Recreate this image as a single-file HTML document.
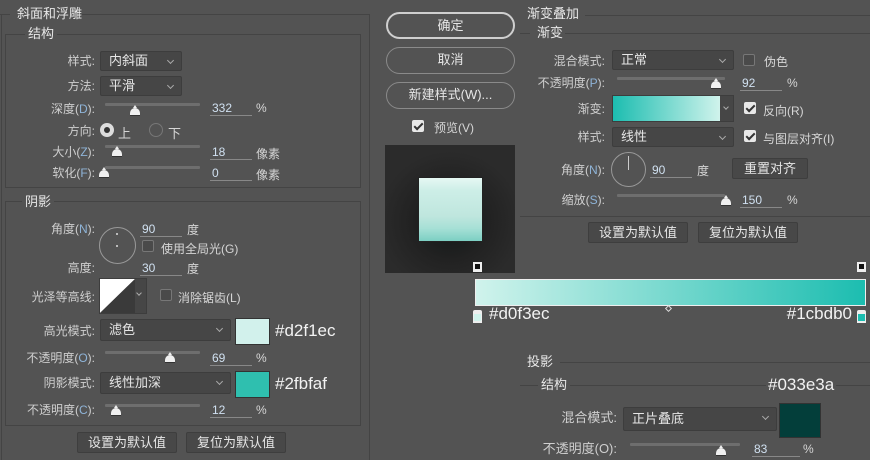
<!DOCTYPE html>
<html><head><meta charset="utf-8"><style>
*{margin:0;padding:0;box-sizing:border-box}
html,body{width:870px;height:460px;overflow:hidden}
body{background:#535353;position:relative;font-family:"Liberation Sans","Noto Sans CJK SC",sans-serif;font-size:12px;color:#d6d6d6}
.a{position:absolute;white-space:nowrap}
.l{position:absolute;white-space:nowrap;text-align:right;color:#cfcfcf;line-height:14px}
.l b{font-weight:normal;color:#8fb4d8}
.t{color:#e8e8e8;font-size:13px;line-height:14px}
.hl{position:absolute;height:1px;background:#444}
.box{position:absolute;border:1px solid #444}
.dd{position:absolute;background:#464646;border:1px solid #3d3d3d;border-radius:2px;color:#e6e6e6;padding-left:8px;line-height:18px;font-size:13px}
.dd:after{content:"";position:absolute;right:8px;top:6px;width:4px;height:4px;border-right:1px solid #aaa;border-bottom:1px solid #aaa;transform:rotate(45deg)}
.tr{position:absolute;height:3px;background:#6e6e6e;border-radius:1px}
.th{position:absolute;width:10px;height:8px;background:#f0f0f0;border-radius:5px 5px 0 0;border-bottom:1px solid #333}
.th:before{content:"";position:absolute;left:3px;top:-3px;border-left:2px solid transparent;border-right:2px solid transparent;border-bottom:3px solid #f0f0f0}
.v{position:absolute;border-bottom:1px solid #888;color:#d0e0f0;line-height:14px;padding-left:2px}
.cb{position:absolute;width:12px;height:12px;border:1px solid #777;border-radius:2px;background:#4a4a4a}
.cb.k{background:#e8e8e8;border-color:#e8e8e8}
.cb.k:after{content:"";position:absolute;left:3px;top:0px;width:3px;height:7px;border-right:2px solid #333;border-bottom:2px solid #333;transform:rotate(45deg)}
.btn{position:absolute;background:#484848;border:1px solid #3e3e3e;border-radius:2px;text-align:center;color:#e6e6e6;font-size:13px}
.pill{position:absolute;border:1px solid #8a8a8a;border-radius:14px;text-align:center;color:#e6e6e6;font-size:13px;line-height:24px}
.hex{position:absolute;color:#f2f2f2;font-size:17px;line-height:18px}
</style></head><body>

<div class="box" style="left:1px;top:14px;width:369px;height:446px;border-top:none;border-bottom:none"></div>
<div class="hl" style="left:0;top:14px;width:10px"></div>
<div class="hl" style="left:82px;top:14px;width:288px"></div>
<div class="a t" style="left:17px;top:7px;background:#535353">斜面和浮雕</div>

<div class="box" style="left:5px;top:34px;width:356px;height:154px"></div>
<div class="a t" style="left:25px;top:27px;background:#535353;padding:0 3px">结构</div>

<div class="l" style="right:775px;top:54px">样式:</div>
<div class="dd" style="left:100px;top:51px;width:82px;height:20px">内斜面</div>
<div class="l" style="right:775px;top:79px">方法:</div>
<div class="dd" style="left:100px;top:76px;width:82px;height:20px">平滑</div>
<div class="l" style="right:775px;top:102px">深度(<b>D</b>):</div>
<div class="tr" style="left:105px;top:103px;width:95px"></div>
<div class="th" style="left:130px;top:108px"></div>
<div class="v" style="left:210px;top:101px;width:42px">332</div>
<div class="a" style="left:256px;top:101px">%</div>
<div class="l" style="right:775px;top:124px">方向:</div>
<div class="a" style="left:100px;top:123px;width:14px;height:14px;border-radius:50%;background:#ddd;border:3px solid #ddd"><div style="width:6px;height:6px;margin:1px;border-radius:50%;background:#333"></div></div>
<div class="a" style="left:118px;top:123px;font-size:13px">上</div>
<div class="a" style="left:149px;top:123px;width:14px;height:14px;border-radius:50%;border:1px solid #777"></div>
<div class="a" style="left:168px;top:123px;font-size:13px">下</div>
<div class="l" style="right:775px;top:145px">大小(<b>Z</b>):</div>
<div class="tr" style="left:105px;top:145px;width:95px"></div>
<div class="th" style="left:112px;top:149px"></div>
<div class="v" style="left:210px;top:145px;width:42px">18</div>
<div class="a" style="left:256px;top:145px">像素</div>
<div class="l" style="right:775px;top:166px">软化(<b>F</b>):</div>
<div class="tr" style="left:105px;top:166px;width:95px"></div>
<div class="th" style="left:99px;top:170px"></div>
<div class="v" style="left:210px;top:166px;width:42px">0</div>
<div class="a" style="left:256px;top:166px">像素</div>

<div class="box" style="left:5px;top:201px;width:356px;height:225px"></div>
<div class="a t" style="left:22px;top:195px;background:#535353;padding:0 3px">阴影</div>
<div class="l" style="right:775px;top:222px">角度(<b>N</b>):</div>
<div class="a" style="left:99px;top:227px;width:37px;height:37px;border-radius:50%;border:1px solid #999"></div>
<div class="a" style="left:116px;top:233px;width:2px;height:2px;background:#bbb"></div>
<div class="a" style="left:116px;top:245px;width:2px;height:2px;background:#bbb"></div>
<div class="v" style="left:140px;top:222px;width:42px">90</div>
<div class="a" style="left:187px;top:221px">度</div>
<div class="cb" style="left:142px;top:240px"></div>
<div class="a" style="left:161px;top:240px">使用全局光(G)</div>
<div class="l" style="right:775px;top:261px">高度:</div>
<div class="v" style="left:140px;top:261px;width:42px">30</div>
<div class="a" style="left:187px;top:260px">度</div>
<div class="l" style="right:775px;top:290px">光泽等高线:</div>
<div class="a" style="left:99px;top:278px;width:48px;height:36px;border:1px solid #3d3d3d;background:#464646"></div>
<svg class="a" style="left:100px;top:279px" width="35" height="34"><polygon points="0,0 35,0 0,34" fill="#fff"/><polygon points="35,0 35,34 0,34" fill="#3a3a3a"/></svg>
<div class="a" style="left:137px;top:291px;width:4px;height:4px;border-right:1px solid #aaa;border-bottom:1px solid #aaa;transform:rotate(45deg)"></div>
<div class="cb" style="left:160px;top:289px"></div>
<div class="a" style="left:178px;top:289px">消除锯齿(L)</div>
<div class="l" style="right:775px;top:324px">高光模式:</div>
<div class="dd" style="left:100px;top:319px;width:131px;height:22px;line-height:20px">滤色</div>
<div class="a" style="left:235px;top:318px;width:35px;height:27px;background:#d2f1ec;border:1px solid #333"></div>
<div class="hex" style="left:275px;top:322px">#d2f1ec</div>
<div class="l" style="right:775px;top:351px">不透明度(<b>O</b>):</div>
<div class="tr" style="left:105px;top:351px;width:95px"></div>
<div class="th" style="left:165px;top:355px"></div>
<div class="v" style="left:210px;top:351px;width:42px">69</div>
<div class="a" style="left:256px;top:351px">%</div>
<div class="l" style="right:775px;top:376px">阴影模式:</div>
<div class="dd" style="left:100px;top:372px;width:131px;height:22px;line-height:20px">线性加深</div>
<div class="a" style="left:235px;top:371px;width:35px;height:27px;background:#2fbfaf;border:1px solid #333"></div>
<div class="hex" style="left:275px;top:375px">#2fbfaf</div>
<div class="l" style="right:775px;top:403px">不透明度(<b>C</b>):</div>
<div class="tr" style="left:105px;top:404px;width:95px"></div>
<div class="th" style="left:111px;top:408px"></div>
<div class="v" style="left:210px;top:403px;width:42px">12</div>
<div class="a" style="left:256px;top:403px">%</div>
<div class="btn" style="left:77px;top:432px;width:100px;height:21px;line-height:19px">设置为默认值</div>
<div class="btn" style="left:186px;top:432px;width:100px;height:21px;line-height:19px">复位为默认值</div>

<div class="pill" style="left:386px;top:12px;width:129px;height:27px;border:2px solid #cfcfcf">确定</div>
<div class="pill" style="left:386px;top:47px;width:129px;height:27px">取消</div>
<div class="pill" style="left:386px;top:82px;width:129px;height:27px">新建样式(W)...</div>
<div class="cb k" style="left:412px;top:120px"></div>
<div class="a" style="left:434px;top:119px">预览(V)</div>
<div class="a" style="left:385px;top:145px;width:130px;height:128px;background:radial-gradient(ellipse 55% 55% at 50% 60%,#101616 0%,#222 55%,#2b2b2b 100%)"></div>
<div class="a" style="left:418px;top:177px;width:65px;height:65px;border:1px solid #222;background:linear-gradient(#e6f8f4 0%,#cdeee7 20%,#bfe6de 60%,#a6e0d6 80%,#7ccfc3 100%)"></div>

<div class="hl" style="left:585px;top:15px;width:285px"></div>
<div class="a t" style="left:527px;top:7px">渐变叠加</div>
<div class="hl" style="left:520px;top:33px;width:10px"></div>
<div class="hl" style="left:565px;top:33px;width:305px"></div>
<div class="a t" style="left:537px;top:26px">渐变</div>
<div class="l" style="right:265px;top:54px">混合模式:</div>
<div class="dd" style="left:612px;top:50px;width:122px;height:20px">正常</div>
<div class="cb" style="left:743px;top:54px"></div>
<div class="a" style="left:764px;top:53px">伪色</div>
<div class="l" style="right:265px;top:76px">不透明度(<b>P</b>):</div>
<div class="tr" style="left:617px;top:77px;width:108px"></div>
<div class="th" style="left:711px;top:81px"></div>
<div class="v" style="left:740px;top:76px;width:42px">92</div>
<div class="a" style="left:787px;top:76px">%</div>
<div class="l" style="right:265px;top:102px">渐变:</div>
<div class="a" style="left:612px;top:95px;width:122px;height:27px;background:#464646;border:1px solid #3d3d3d"></div>
<div class="a" style="left:613px;top:96px;width:107px;height:25px;background:linear-gradient(90deg,#1cbdb0,#d0f3ec)"></div>
<div class="a" style="left:724px;top:105px;width:4px;height:4px;border-right:1px solid #aaa;border-bottom:1px solid #aaa;transform:rotate(45deg)"></div>
<div class="cb k" style="left:744px;top:102px"></div>
<div class="a" style="left:763px;top:102px">反向(R)</div>
<div class="l" style="right:265px;top:130px">样式:</div>
<div class="dd" style="left:612px;top:127px;width:122px;height:20px">线性</div>
<div class="cb k" style="left:744px;top:130px"></div>
<div class="a" style="left:763px;top:130px">与图层对齐(I)</div>
<div class="l" style="right:265px;top:163px">角度(<b>N</b>):</div>
<div class="a" style="left:611px;top:152px;width:35px;height:35px;border-radius:50%;border:1px solid #999"></div>
<div class="a" style="left:628px;top:156px;width:1px;height:14px;background:#ccc"></div>
<div class="v" style="left:650px;top:163px;width:42px">90</div>
<div class="a" style="left:697px;top:162px">度</div>
<div class="btn" style="left:732px;top:158px;width:76px;height:21px;line-height:19px">重置对齐</div>
<div class="l" style="right:265px;top:193px">缩放(<b>S</b>):</div>
<div class="tr" style="left:617px;top:194px;width:108px"></div>
<div class="th" style="left:721px;top:198px"></div>
<div class="v" style="left:740px;top:193px;width:42px">150</div>
<div class="a" style="left:787px;top:193px">%</div>
<div class="hl" style="left:520px;top:216px;width:350px"></div>
<div class="btn" style="left:588px;top:222px;width:100px;height:21px;line-height:19px">设置为默认值</div>
<div class="btn" style="left:698px;top:222px;width:100px;height:21px;line-height:19px">复位为默认值</div>

<div class="a" style="left:473px;top:262px;width:9px;height:10px;background:#eee;border:2px solid #eee"><div style="width:5px;height:5px;background:#111"></div></div>
<div class="a" style="left:857px;top:262px;width:9px;height:10px;background:#eee;border:2px solid #eee"><div style="width:5px;height:5px;background:#111"></div></div>
<div class="a" style="left:475px;top:279px;width:391px;height:27px;border:1px solid #eee;background:linear-gradient(90deg,#d0f3ec,#1cbdb0)"></div>
<div class="a" style="left:473px;top:310px;width:9px;height:13px;background:#eee;border-radius:2px 2px 0 0"><div style="margin:4px 1px 0;width:7px;height:7px;background:#d0f3ec"></div></div>
<div class="a" style="left:857px;top:310px;width:9px;height:13px;background:#eee;border-radius:2px 2px 0 0"><div style="margin:4px 1px 0;width:7px;height:7px;background:#1cbdb0"></div></div>
<div class="hex" style="left:489px;top:305px">#d0f3ec</div>
<div class="hex" style="right:18px;top:305px">#1cbdb0</div>
<div class="a" style="left:666px;top:306px;width:5px;height:5px;border:1px solid #ddd;transform:rotate(45deg)"></div>

<div class="hl" style="left:560px;top:362px;width:310px"></div>
<div class="a t" style="left:527px;top:355px">投影</div>
<div class="hl" style="left:520px;top:385px;width:350px"></div>
<div class="a t" style="left:538px;top:378px;background:#535353;padding:0 3px">结构</div>
<div class="hex" style="left:766px;top:376px;background:#535353;padding:0 2px">#033e3a</div>
<div class="l" style="right:253px;top:411px;font-size:13px">混合模式:</div>
<div class="dd" style="left:623px;top:407px;width:154px;height:24px;line-height:22px">正片叠底</div>
<div class="a" style="left:779px;top:403px;width:42px;height:35px;background:#033e3a;border:1px solid #333"></div>
<div class="l" style="right:253px;top:442px;font-size:13px">不透明度(O):</div>
<div class="tr" style="left:630px;top:443px;width:110px"></div>
<div class="th" style="left:716px;top:448px"></div>
<div class="v" style="left:752px;top:442px;width:48px">83</div>
<div class="a" style="left:803px;top:442px">%</div>
</body></html>
